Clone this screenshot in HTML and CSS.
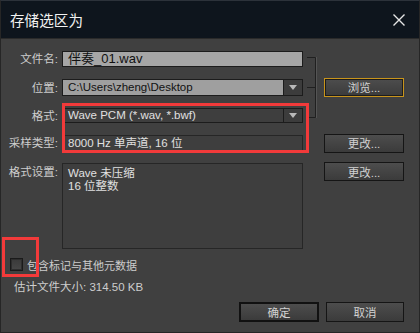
FILE: index.html
```html
<!DOCTYPE html>
<html lang="zh-CN">
<head>
  <meta charset="UTF-8" />
  <title>存储选区为</title>
  <link rel="stylesheet" href="styles.css">
</head>
<body>
  <div class="dialog">
    <div class="titlebar">
      <span class="title">存储选区为</span>
      <svg class="close" width="12" height="12" viewBox="0 0 12 12">
        <path d="M0.5 0.5 L11.5 11.5 M11.5 0.5 L0.5 11.5" stroke="#e6e6e6" stroke-width="1.4" fill="none" />
      </svg>
    </div>

    <div class="content">
      <div class="form">
        <div class="label">文件名:</div>
        <div class="field light name">伴奏_01.wav</div>
        <div class="bracket">
          <svg width="21" height="72" viewBox="0 0 21 72">
            <path d="M4 6.5 H12.5 V66.5 H4 M4 36.5 H12.5" stroke="#202020" stroke-width="1" fill="none" />
            <path d="M13.5 6 V67" stroke="#555555" stroke-width="1" fill="none" />
          </svg>
        </div>
        <div></div>

        <div class="label">位置:</div>
        <div class="field combo">
          <span class="combo-text light">C:\Users\zheng\Desktop</span>
          <span class="combo-arrow"></span>
        </div>
        <div class="btn focus">浏览...</div>

        <div class="label">格式:</div>
        <div class="field combo">
          <span class="combo-text dark">Wave PCM (*.wav, *.bwf)</span>
          <span class="combo-arrow"></span>
        </div>
        <div></div>

        <div class="label">采样类型:</div>
        <div class="field dark">8000 Hz 单声道, 16 位</div>
        <div></div>
        <div class="btn">更改...</div>

        <div class="label top">格式设置:</div>
        <div class="field dark settings">
          <div>Wave 未压缩</div>
          <div>16 位整数</div>
        </div>
        <div></div>
        <div class="btn">更改...</div>
      </div>

      <div class="check">
        <span class="checkbox"></span>
        <span>包含标记与其他元数据</span>
      </div>

      <div class="estimate">估计文件大小: 314.50 KB</div>

      <div class="actions">
        <div class="btn default">确定</div>
        <div class="btn cancel">取消</div>
      </div>
    </div>

    <div class="mark mark-format"></div>
    <div class="mark mark-check"></div>
  </div>
</body>
</html>
```

FILE: styles.css
```css
body {
  margin: 0;
  background: #404040;
  font-family: "Liberation Sans", "Noto Sans CJK SC", sans-serif;
  font-size: 11.5px;
  color: #cdcdcd;
}

.dialog {
  position: relative;
  width: 420px;
  height: 333px;
  box-sizing: border-box;
  border: 1px solid #262626;
  border-top: 1px solid #2c323a;
  background: #404040;
}

.titlebar {
  height: 37px;
  background: #0e151d;
  display: flex;
  align-items: center;
  justify-content: space-between;
  padding: 0 14px 0 9px;
  border-bottom: 1px solid #2a2a2a;
}

.title {
  font-family: "Noto Sans CJK SC", sans-serif;
  font-size: 14.6px;
  color: #f2f2f2;
}

.content {
  padding-top: 12px;
}

.form {
  display: grid;
  grid-template-columns: 61px 241px 21px 80px;
  grid-template-rows: 16px 17px 15px 16px 86px;
  row-gap: 12px;
}

.label {
  text-align: right;
  padding-right: 4px;
  align-self: center;
  line-height: 14px;
}

.label.top {
  align-self: start;
  padding-top: 2px;
}

.field {
  box-sizing: border-box;
  border: 1px solid #1c1c1c;
  display: flex;
  align-items: center;
  padding-left: 5px;
  white-space: nowrap;
  line-height: 13px;
}

.field.light {
  background: #a6a6a6;
  color: #111;
}

.field.name {
  font-size: 13px;
  line-height: 13px;
  align-items: flex-start;
  padding-top: 0;
}

.field.dark {
  background: #3e3e3e;
  border-color: #262626;
  color: #e0e0e0;
}

.field.settings {
  flex-direction: column;
  align-items: flex-start;
  justify-content: flex-start;
  padding-top: 3px;
  line-height: 13px;
}

.combo {
  padding-left: 0;
  align-items: stretch;
}

.combo-text {
  flex: 1;
  display: flex;
  align-items: center;
  padding-left: 5px;
}

.combo-text.light {
  background: #9f9f9f;
  color: #111;
}

.combo-text.dark {
  background: #3e3e3e;
  color: #e0e0e0;
}

.combo-arrow {
  width: 18px;
  background: #3c3c3c;
  border-left: 1px solid #1c1c1c;
  display: flex;
  align-items: center;
  justify-content: center;
}

.combo-arrow::after {
  content: "";
  border-left: 4px solid transparent;
  border-right: 4px solid transparent;
  border-top: 5px solid #b8b8b8;
}

.bracket {
  grid-row: 1 / 4;
  grid-column: 3;
}

.btn {
  box-sizing: border-box;
  height: 19px;
  align-self: center;
  border: 1px solid #151515;
  background: linear-gradient(#4d4d4d, #3b3b3b);
  color: #d2d2d2;
  display: flex;
  align-items: center;
  justify-content: center;
  font-size: 11.5px;
}

.btn.focus {
  border-color: #c8941c;
  box-shadow: inset 0 0 0 1px #1c1c1c;
  margin-top: -1px;
}

.form > .btn:last-child {
  align-self: start;
  margin-top: -1px;
}

.check {
  display: flex;
  align-items: center;
  gap: 4px;
  margin: 9px 0 0 9px;
  height: 13px;
  font-family: "Noto Sans CJK SC", sans-serif;
  font-size: 11px;
}

.checkbox {
  width: 13px;
  height: 13px;
  box-sizing: border-box;
  border: 1px solid #1a1a1a;
  background: linear-gradient(#3a3a3a, #474747);
  box-shadow: inset 0 0 0 1px #2e2e2e;
}

.estimate {
  margin: 10px 0 0 13px;
  line-height: 12px;
}

.actions {
  display: flex;
  justify-content: flex-end;
  gap: 7px;
  margin-top: 9px;
  padding-right: 15px;
}

.actions .btn {
  width: 78px;
  height: 20px;
}

.btn.default {
  width: 80px;
  border: 2px solid #111;
}

.mark {
  position: absolute;
  border: 3px solid #f23a3a;
  box-sizing: border-box;
}

.mark-format {
  left: 61px;
  top: 102px;
  width: 247px;
  height: 50px;
}

.mark-check {
  left: 1px;
  top: 236px;
  width: 37px;
  height: 40px;
}
```
